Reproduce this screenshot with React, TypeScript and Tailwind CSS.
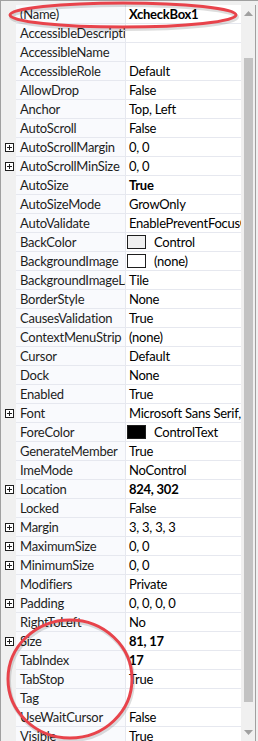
import React from "react";

type Row = {
  name: string;
  value?: string;
  bold?: boolean;
  expand?: boolean;
  swatch?: string;
};

const rows: Row[] = [
  { name: "(Name)", value: "XcheckBox1", bold: true },
  { name: "AccessibleDescription" },
  { name: "AccessibleName" },
  { name: "AccessibleRole", value: "Default" },
  { name: "AllowDrop", value: "False" },
  { name: "Anchor", value: "Top, Left" },
  { name: "AutoScroll", value: "False" },
  { name: "AutoScrollMargin", value: "0, 0", expand: true },
  { name: "AutoScrollMinSize", value: "0, 0", expand: true },
  { name: "AutoSize", value: "True", bold: true },
  { name: "AutoSizeMode", value: "GrowOnly" },
  { name: "AutoValidate", value: "EnablePreventFocusChange" },
  { name: "BackColor", value: "Control", swatch: "#f0f0f0" },
  { name: "BackgroundImage", value: "(none)", swatch: "#ffffff" },
  { name: "BackgroundImageLayout", value: "Tile" },
  { name: "BorderStyle", value: "None" },
  { name: "CausesValidation", value: "True" },
  { name: "ContextMenuStrip", value: "(none)" },
  { name: "Cursor", value: "Default" },
  { name: "Dock", value: "None" },
  { name: "Enabled", value: "True" },
  { name: "Font", value: "Microsoft Sans Serif, 8.25pt", expand: true },
  { name: "ForeColor", value: "ControlText", swatch: "#000000" },
  { name: "GenerateMember", value: "True" },
  { name: "ImeMode", value: "NoControl" },
  { name: "Location", value: "824, 302", bold: true, expand: true },
  { name: "Locked", value: "False" },
  { name: "Margin", value: "3, 3, 3, 3", expand: true },
  { name: "MaximumSize", value: "0, 0", expand: true },
  { name: "MinimumSize", value: "0, 0", expand: true },
  { name: "Modifiers", value: "Private" },
  { name: "Padding", value: "0, 0, 0, 0", expand: true },
  { name: "RightToLeft", value: "No" },
  { name: "Size", value: "81, 17", bold: true, expand: true },
  { name: "TabIndex", value: "17", bold: true },
  { name: "TabStop", value: "True" },
  { name: "Tag" },
  { name: "UseWaitCursor", value: "False" },
  { name: "Visible", value: "True" },
];

const PlusBox = () => (
  <svg width="9" height="9" viewBox="0 0 9 9" className="block">
    <rect x="0.5" y="0.5" width="8" height="8" fill="#fff" stroke="#1e1e1e" />
    <path d="M2 4.5h5M4.5 2v5" stroke="#1e1e1e" />
  </svg>
);

export default function App() {
  return (
    <div
      className="relative w-[258px] h-[741px] overflow-hidden bg-[#f0f0f0] text-[13px] tracking-[-0.25px] text-[#1e1e1e]"
      style={{ fontFamily: 'Lato, "Segoe UI", sans-serif' }}
    >
      <div className="flex h-full border-l border-t border-[#a0a0a0] pt-[4px] pr-[2px]">
        <div className="flex flex-col w-[240px] shrink-0">
          {rows.map((r) => (
            <div key={r.name} className="flex h-[19px] shrink-0 leading-[19px]">
              <div className="w-[15px] shrink-0 flex items-center justify-center pl-[1px]">
                {r.expand && <PlusBox />}
              </div>
              <div className="w-[109px] shrink-0 bg-[#f9fafd] border-b border-[#e6e8ef] pl-[4px] whitespace-nowrap overflow-hidden">
                {r.name}
              </div>
              <div className="w-px shrink-0 bg-[#e6e8ef]" />
              <div className="flex-1 min-w-0 bg-white border-b border-[#e6e8ef] pl-[3px] whitespace-nowrap overflow-hidden flex items-start text-black">
                {r.swatch && (
                  <span
                    className="mt-[2px] mr-[8px] ml-[-2px] h-[14px] w-[19px] shrink-0 border border-[#1e1e1e]"
                    style={{ background: r.swatch }}
                  />
                )}
                <span className={r.bold ? "font-bold" : ""}>{r.value}</span>
              </div>
            </div>
          ))}
        </div>
        <div className="w-[15px] shrink-0 bg-[#f0f0f0] flex flex-col items-center border-r border-[#a0a0a0]">
          <div className="h-[17px] flex items-center justify-center">
            <svg width="9" height="5" viewBox="0 0 9 5">
              <path d="M0 5L4.5 0L9 5Z" fill="#a0a0a0" />
            </svg>
          </div>
          <div className="mt-[36px] w-[9px] h-[648px] bg-[#c2c2c2]" />
          <div className="mt-[22px] h-[17px] flex items-center justify-center">
            <svg width="9" height="5" viewBox="0 0 9 5">
              <path d="M0 0L4.5 5L9 0Z" fill="#a0a0a0" />
            </svg>
          </div>
        </div>
      </div>
      <svg
        className="absolute inset-0 pointer-events-none"
        width="258"
        height="741"
        viewBox="0 0 258 741"
      >
        <ellipse cx="124" cy="17" rx="113" ry="12" fill="none" stroke="#00000022" strokeWidth="4" />
        <ellipse cx="123" cy="15" rx="113" ry="12" fill="none" stroke="#e8434b" strokeWidth="3" />
        <ellipse cx="71" cy="681" rx="62" ry="59" fill="none" stroke="#00000022" strokeWidth="4" />
        <ellipse cx="70" cy="679" rx="62" ry="59" fill="none" stroke="#e8434b" strokeWidth="3" />
      </svg>
    </div>
  );
}
